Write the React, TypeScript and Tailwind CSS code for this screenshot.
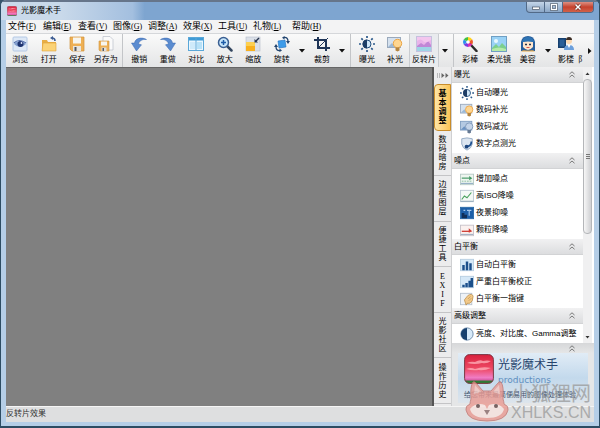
import React, { useState } from 'react';

const FONT = "font-['Liberation_Sans','Noto_Sans_CJK_SC',sans-serif]";

const menus = [
  ['文件', 'F'],
  ['编辑', 'E'],
  ['查看', 'V'],
  ['图像', 'G'],
  ['调整', 'A'],
  ['效果', 'X'],
  ['工具', 'U'],
  ['礼物', 'L'],
  ['帮助', 'H'],
];

const tabs = ['基本调整', '数码暗房', '边框图层', '便捷工具', 'EXIF', '光影社区', '操作历史'];

const groups = [
  {
    title: '曝光',
    items: [
      ['sun', '自动曝光'],
      ['fill', '数码补光'],
      ['reduce', '数码减光'],
      ['spot', '数字点测光'],
    ],
  },
  {
    title: '噪点',
    items: [
      ['noise', '增加噪点'],
      ['iso', '高ISO降噪'],
      ['night', '夜景抑噪'],
      ['grain', '颗粒降噪'],
    ],
  },
  {
    title: '白平衡',
    items: [
      ['bars', '自动白平衡'],
      ['stairs', '严重白平衡校正'],
      ['finger', '白平衡一指键'],
    ],
  },
  {
    title: '高级调整',
    items: [['contrast', '亮度、对比度、Gamma调整']],
  },
];

// all icons are drawn on a 16x16 grid
const icons: Record<string, React.ReactNode> = {
  browse: (
    <>
      <rect x="1" y="1" width="14" height="14" rx="1" fill="#dde8f6" stroke="#b4c8e4" />
      <path d="M2 8q6-6 12 0q-6 6-12 0" fill="#7f9cce" />
      <circle cx="8.5" cy="8" r="3" fill="#1f3470" />
      <circle cx="9.5" cy="7" r="0.9" fill="#dbe6ff" />
      <path d="M2 7q5-5 12 0" fill="none" stroke="#5570ac" strokeWidth="1.2" />
    </>
  ),
  open: (
    <>
      <path d="M1 4h5l1 2h8v9H1z" fill="#e8ae45" />
      <path d="M2 7h13v8H1z" fill="#fbd377" stroke="#dfa23b" strokeWidth="0.6" />
      <path d="M14 5q0-3-3-3" fill="none" stroke="#3b5b92" strokeWidth="1.5" />
      <path d="M9 2l3-2v4z" fill="#3b5b92" />
    </>
  ),
  save: (
    <>
      <path d="M1 1h14v14H3l-2-2z" fill="#eeb055" stroke="#d0943c" strokeWidth="0.7" />
      <rect x="4" y="1.5" width="8" height="6" fill="#f7f5ee" />
      <rect x="4" y="10" width="8" height="5" fill="#e8e6e0" />
      <rect x="5.5" y="11" width="2" height="4" fill="#55585e" />
    </>
  ),
  saveAs: (
    <>
      <path d="M5 0.5h7l3 3V14H5z" fill="#fafafa" stroke="#b9bfc8" strokeWidth="0.7" />
      <path d="M1 5h10v10H2l-1-1z" fill="#eeb055" stroke="#d0943c" strokeWidth="0.6" />
      <rect x="3" y="5.5" width="6" height="4" fill="#f7f5ee" />
      <rect x="3.5" y="11.5" width="5" height="3.5" fill="#dedede" />
      <rect x="4.5" y="12" width="1.5" height="3" fill="#55585e" />
    </>
  ),
  undo: (
    <path d="M0.5 7l3 .1C4 2.500 10 .5 15.500 3.500 11 3 8 5 7.500 8l3 .8L5.500 15z" fill="#5b8cd0" stroke="#3a68b0" strokeWidth="0.5" />
  ),
  redo: (
    <path d="M15.500 7l-3 .1C12 2.500 6 .5 .5 3.500 5 3 8 5 8.500 8l-3 .8L10.500 15z" fill="#5b8cd0" stroke="#3a68b0" strokeWidth="0.5" />
  ),
  compare: (
    <>
      <rect x="0.5" y="1.5" width="15" height="13" fill="#eaf6fe" stroke="#5aa7d8" />
      <rect x="1" y="2" width="14" height="2.5" fill="#3f9bd6" />
      <path d="M8 2v12" stroke="#5aa7d8" />
      <rect x="2" y="6" width="5" height="7" fill="#cfeafa" />
      <rect x="9" y="6" width="5" height="7" fill="#b8e1f7" />
    </>
  ),
  zoomIn: (
    <>
      <path d="M10 10l4.500 4.500" stroke="#33465f" strokeWidth="2.5" strokeLinecap="round" />
      <circle cx="6.5" cy="6.5" r="5" fill="#c7e5fa" stroke="#3a5f92" strokeWidth="1.5" />
      <path d="M6.500 4v5M4 6.500h5" stroke="#1e5ca8" strokeWidth="1.5" />
    </>
  ),
  resize: (
    <>
      <rect x="1" y="1" width="14" height="14" fill="#dbe0e8" stroke="#b5bdca" strokeWidth="0.6" />
      <rect x="1" y="6" width="9" height="9" fill="#f9b01e" />
      <rect x="1" y="6" width="9" height="4" fill="#fdd051" />
      <path d="M14 2l-3 3" stroke="#26334d" strokeWidth="1.5" />
      <path d="M9.500 6.500V3l3.500 3.500z" fill="#26334d" />
    </>
  ),
  rotate: (
    <>
      <path d="M4 5l7-1 1 7-7 1z" fill="#3d9be9" stroke="#1e6fc0" strokeWidth="0.6" />
      <path d="M10 1.500q4-.5 4 4M6 14.500q-4 .5-4-4" fill="none" stroke="#22446f" strokeWidth="1.3" />
      <path d="M12 5h4l-2 3zM0 11h4L2 8zM10.500 0v3.500L8 1.800zM5.500 12.500V16L8 14.500z" fill="#22446f" />
    </>
  ),
  crop: (
    <>
      <path d="M4 1v11h12M0 4h12v11" fill="none" stroke="#1f3558" strokeWidth="2" />
      <path d="M4 12L14 2" stroke="#1f3558" />
    </>
  ),
  sun: (
    <>
      <circle cx="8" cy="8" r="4" fill="#cfe6f8" stroke="#24507f" />
      <path d="M8 3.500a4.500 4.500 0 0 0 0 9z" fill="#1d3d66" />
      <path d="M8 0v2M8 14v2M0 8h2M14 8h2M2.300 2.300l1.500 1.500M12.200 12.200l1.500 1.500M2.300 13.700l1.500-1.500M12.200 3.800l1.500-1.500" stroke="#2c5a8c" strokeWidth="1.7" />
    </>
  ),
  fill: (
    <>
      <rect x="0.5" y="1.5" width="13" height="10" fill="#d5e1ee" stroke="#9aa9bc" />
      <path d="M1 11l4-4 3 4z" fill="#9bb8d6" />
      <circle cx="10.5" cy="7.5" r="4.2" fill="#ffd690" stroke="#eba546" />
      <path d="M8.500 11.500h4v3l-2 1-2-1z" fill="#b5853f" />
    </>
  ),
  reduce: (
    <>
      <rect x="0.5" y="1.5" width="13" height="10" fill="#b4c9e2" stroke="#7f9cc0" />
      <path d="M1 11l4-4 3 4z" fill="#6a91c1" />
      <circle cx="10.5" cy="7.5" r="4.2" fill="#c3d3e8" stroke="#7d96b7" />
      <path d="M8.500 11.500h4v3l-2 1-2-1z" fill="#667a94" />
    </>
  ),
  invert: (
    <>
      <rect x="0.5" y="0.5" width="15" height="15" fill="#e9b4ea" stroke="#c5c0de" />
      <path d="M1 10l4-3 3 2 4-4 3 4v3H1z" fill="#c087d6" />
      <path d="M1 5q4-3 6 0t8-1v-3H1z" fill="#f3c6ee" />
      <rect x="1" y="11" width="14" height="4" fill="#9ed4e6" />
    </>
  ),
  wand: (
    <>
      <path d="M8 8l6.500 7" stroke="#2b2b2b" strokeWidth="2.5" strokeLinecap="round" />
      <path d="M6 6V1a5 5 0 0 1 4.300 2.500z" fill="#ffd21c" />
      <path d="M6 6l4.300-2.500a5 5 0 0 1 0 5z" fill="#ef5b2b" />
      <path d="M6 6l4.300 2.500A5 5 0 0 1 6 11z" fill="#d92cb4" />
      <path d="M6 6v5a5 5 0 0 1-4.300-2.500z" fill="#7a3be0" />
      <path d="M6 6L1.700 8.500a5 5 0 0 1 0-5z" fill="#2c8ff0" />
      <path d="M6 6L1.700 3.500A5 5 0 0 1 6 1z" fill="#42c043" />
      <circle cx="6" cy="6" r="1.8" fill="#fff" />
    </>
  ),
  soft: (
    <>
      <rect x="0.5" y="0.5" width="15" height="15" fill="#9ad2f6" stroke="#6f9fc4" />
      <circle cx="5" cy="5" r="2" fill="#e8f8ff" />
      <path d="M1 12l4-4 3 3 3-4 4 4v4H1z" fill="#7ccf8d" />
      <path d="M1 13q7-3 14 0v2H1z" fill="#b5eba8" />
    </>
  ),
  beauty: (
    <>
      <path d="M1 15V6q1-6 7-6t7 6v9z" fill="#275f9e" />
      <path d="M3 6q5-2 10 0v5q-5 6-10 0z" fill="#ffe5cb" />
      <path d="M2 6q1-5 6-5t6 5q-6-1-12 0" fill="#2f74b4" />
      <path d="M5 8.500h2M9 8.500h2" stroke="#24344d" strokeWidth="1.3" />
      <path d="M6.500 11.500h3" stroke="#d4574e" />
      <path d="M1 15.500q2-2 5-1h4q3-1 5 1z" fill="#e9a947" />
    </>
  ),
  studio: (
    <>
      <rect x="0" y="2" width="8" height="10" fill="#17406e" />
      <rect x="1.5" y="3.5" width="5" height="7" fill="#2a5f98" />
      <circle cx="11" cy="5" r="3" fill="#fbd7b0" />
      <path d="M8 4q0-3 3-3t3 3z" fill="#3b2c24" />
      <path d="M6 14q0-5 5-5t5 5z" fill="#6c9fdb" />
      <path d="M9.500 9l1.500 3 1.500-3z" fill="#fff" />
    </>
  ),
  spot: (
    <>
      <path d="M2 2q6-2 12 0v6q-1 5-6 7-5-2-6-7z" fill="#dbe5f0" stroke="#8ea5c0" />
      <path d="M13 5q0 5-5 6" fill="none" stroke="#1c4f8f" strokeWidth="2" />
      <circle cx="7.5" cy="11" r="2.2" fill="#1d447c" />
    </>
  ),
  noise: (
    <>
      <rect x="0.5" y="2.5" width="15" height="12" fill="#eef6f0" stroke="#b5c8c4" />
      <path d="M2 7h9" stroke="#3f9560" strokeWidth="1.3" />
      <path d="M10.500 4.500L14 7l-3.500 2.500z" fill="#3f9560" />
      <path d="M2 10.500h2M5 10.500h2M8 10.500h2M11 10.500h2" stroke="#86b89a" />
      <path d="M1 13h14" stroke="#7d9cba" />
    </>
  ),
  iso: (
    <>
      <rect x="0.5" y="1.5" width="15" height="13" fill="#f4f9f6" stroke="#b9c6d1" />
      <path d="M2 12l3-4 3 2 5-6" fill="none" stroke="#4ba35f" strokeWidth="1.3" />
      <path d="M1 14h14" stroke="#8aa2b5" />
    </>
  ),
  night: (
    <>
      <rect x="0.5" y="1.5" width="15" height="13" fill="#1d5fa8" stroke="#2a6aa8" />
      <path d="M2 14V8h3v2h3v4z" fill="#0f2e57" />
      <path d="M8 5h5M10.500 5v6M4 5h2" stroke="#a8cbee" strokeWidth="1.3" />
    </>
  ),
  grain: (
    <>
      <rect x="0.5" y="2.5" width="15" height="12" fill="#fbf1ef" stroke="#c5c0c8" />
      <path d="M2 9.500h9" stroke="#cf3d34" strokeWidth="1.5" />
      <path d="M10 6l4 3.500-4 1.500z" fill="#cf3d34" />
      <path d="M1 13h14" stroke="#8a9fb8" />
    </>
  ),
  bars: (
    <>
      <rect x="0.5" y="1.5" width="15" height="13" fill="#d5e8f7" stroke="#b5cde0" />
      <path d="M4 14V8M8 14V4M12 14V6" stroke="#1b4f8b" strokeWidth="2.8" />
    </>
  ),
  stairs: (
    <>
      <rect x="0.5" y="1.5" width="15" height="13" fill="#d5e8f7" stroke="#b5cde0" />
      <path d="M4 14v-3M7.500 14V9M11 14V6.500M13.500 14V3.500" stroke="#1b4f8b" strokeWidth="2.8" />
    </>
  ),
  finger: (
    <>
      <rect x="0.5" y="1.5" width="13" height="13" fill="#eef2f7" stroke="#b6c1ce" />
      <path d="M5 9l4-5q5-3 6 1l-1 5q-2 4-6 3l-1 2z" fill="#f2c98a" stroke="#b98a43" strokeWidth="0.8" />
      <path d="M9 8l3-3M10 10l3-3" stroke="#b98a43" strokeWidth="0.7" />
    </>
  ),
  contrast: (
    <>
      <circle cx="8" cy="8" r="7" fill="#d6e9f8" stroke="#6685a5" />
      <path d="M8 1a7 7 0 0 0 0 14z" fill="#17406e" />
    </>
  ),
};

function Icon({ name, className }: { name: string; className: string }) {
  return (
    <svg viewBox="0 0 16 16" className={`shrink-0 ${className}`} aria-hidden="true">
      {icons[name]}
    </svg>
  );
}

function Logo({ className }: { className: string }) {
  return (
    <svg viewBox="0 0 30 30" className={`shrink-0 ${className}`} aria-hidden="true">
      <defs>
        <linearGradient id="sky" x1="0" y1="0" x2="0" y2="1">
          <stop offset="0" stopColor="#d8203c" />
          <stop offset="0.5" stopColor="#ee4a66" />
          <stop offset="0.8" stopColor="#f07cc4" />
          <stop offset="0.88" stopColor="#d85aa4" />
          <stop offset="0.92" stopColor="#2f7a35" />
        </linearGradient>
      </defs>
      <rect x="0.6" y="0.6" width="28.8" height="28.8" rx="5" fill="url(#sky)" stroke="#7b3743" strokeWidth="1" />
      <path d="M3 9q4-2 8-1 5-3 8-1 4-1 8 0-4 3-9 2-7 2-15 0M2 15q5-2 9 0 8-3 16-1-7 3-12 2-7 1-13-1" fill="#ffb3bc" opacity="0.75" />
    </svg>
  );
}

function Tool({ icon, label, active }: { icon: string; label: string; active?: boolean }) {
  return (
    <button
      type="button"
      className={`flex min-w-0 flex-1 flex-col items-center gap-px pt-0.5 ${active ? 'border-x border-[#c9ccd0] bg-[#e9ebee]' : ''}`}
    >
      <Icon name={icon} className="size-4" />
      <span className="text-[8px] leading-[14px] whitespace-nowrap">{label}</span>
    </button>
  );
}

function DropArrow({ label }: { label: string }) {
  return (
    <button type="button" aria-label={label} className="flex w-3 shrink-0 items-center justify-center">
      <svg viewBox="0 0 6 4" className="h-1 w-1.5"><path d="M0 0h6L3 3.500z" fill="#111" /></svg>
    </button>
  );
}

function Separator() {
  return <div className="mx-0.5 w-px shrink-0 bg-[#c3c5c8]" />;
}

function Chevrons() {
  return (
    <svg viewBox="0 0 6 7" className="h-[7px] w-1.5" aria-hidden="true">
      <path d="M0.500 3L3 .8 5.500 3M.5 6.200L3 4l2.500 2.200" fill="none" stroke="#6c6c6c" strokeWidth="0.9" />
    </svg>
  );
}

function TitleBar() {
  return (
    <header className="flex h-5 shrink-0 items-start border-t-2 border-[#66758a] bg-linear-to-r from-[#c9d9ea] from-10% via-[#a3bfdf] via-22% to-[#7ea5d0] to-24%">
      <div className="flex h-[17px] flex-1 items-center gap-1 pl-1.5">
        <Logo className="size-2.5" />
        <h1 className="text-[8px] leading-[12px]">光影魔术手</h1>
      </div>
      <div className="mr-[5px] flex h-[11px] overflow-hidden rounded-b border border-t-0 border-[#526a88] bg-linear-to-b from-[#c4d5e8] to-[#8aa6c6]">
        <button type="button" aria-label="最小化" className="flex w-[18px] items-center justify-center border-r border-[#526a88]">
          <svg viewBox="0 0 8 6" className="h-1.5 w-2"><rect x="0.5" y="3" width="7" height="2.5" fill="#fff" stroke="#4a5666" strokeWidth="0.7" /></svg>
        </button>
        <button type="button" aria-label="最大化" className="flex w-[18px] items-center justify-center border-r border-[#526a88]">
          <svg viewBox="0 0 8 8" className="size-2"><rect x="1.5" y="1.5" width="5" height="5" fill="none" stroke="#4a5666" strokeWidth="2.5" /><rect x="1.5" y="1.5" width="5" height="5" fill="none" stroke="#fff" strokeWidth="1.3" /></svg>
        </button>
        <button type="button" aria-label="关闭" className="flex w-[30px] items-center justify-center bg-linear-to-b from-[#dc8f82] via-[#c5412d] to-[#d0614a]">
          <svg viewBox="0 0 8 8" className="size-2"><path d="M1.500 1.500l5 5M6.500 1.500l-5 5" stroke="#5c2019" strokeWidth="2.6" /><path d="M1.500 1.500l5 5M6.500 1.500l-5 5" stroke="#fff" strokeWidth="1.5" /></svg>
        </button>
      </div>
    </header>
  );
}

function MenuBar() {
  return (
    <nav className="flex h-3.5 shrink-0 items-end border-b border-[#d5d7da] bg-[#f3f3f4] pl-0.5">
      {menus.map(([name, key]) => (
        <button key={key} type="button" className={`text-left text-[9px] leading-[12px] whitespace-nowrap ${key === 'L' ? 'w-[39px]' : 'w-[35px]'}`}>
          {name}
          <span className="font-['Liberation_Serif',serif] text-[8px]">
            (<u>{key}</u>)
          </span>
        </button>
      ))}
    </nav>
  );
}

function Toolbar() {
  return (
    <div className="flex h-[33px] shrink-0 overflow-hidden bg-linear-to-b from-[#fafafa] to-[#e4e5e6]">
      <div className="flex w-[114px] shrink-0">
        <Tool icon="browse" label="浏览" />
        <Tool icon="open" label="打开" />
        <Tool icon="save" label="保存" />
        <Tool icon="saveAs" label="另存为" />
      </div>
      <Separator />
      <div className="flex w-[171px] shrink-0">
        <Tool icon="undo" label="撤销" />
        <Tool icon="redo" label="重做" />
        <Tool icon="compare" label="对比" />
        <Tool icon="zoomIn" label="放大" />
        <Tool icon="resize" label="缩放" />
        <Tool icon="rotate" label="旋转" />
      </div>
      <DropArrow label="旋转选项" />
      <div className="flex w-7 shrink-0">
        <Tool icon="crop" label="裁剪" />
      </div>
      <DropArrow label="裁剪选项" />
      <Separator />
      <div className="flex w-[86px] shrink-0">
        <Tool icon="sun" label="曝光" />
        <Tool icon="fill" label="补光" />
        <Tool icon="invert" label="反转片" active />
      </div>
      <DropArrow label="反转片选项" />
      <Separator />
      <div className="flex w-[86px] shrink-0">
        <Tool icon="wand" label="彩棒" />
        <Tool icon="soft" label="柔光镜" />
        <Tool icon="beauty" label="美容" />
      </div>
      <DropArrow label="美容选项" />
      <div className="flex w-6 shrink-0">
        <Tool icon="studio" label="影楼" />
      </div>
      <button type="button" className="flex min-w-0 flex-1 items-end pb-px text-[8px] leading-[12px]">
        阝
      </button>
      <button type="button" aria-label="更多" className="flex w-1.5 shrink-0 items-center">
        <svg viewBox="0 0 4 6" className="h-1.5 w-1"><path d="M0 0v6l3.500-3z" fill="#111" /></svg>
      </button>
    </div>
  );
}

function TabStrip({ current, onSelect }: { current: string; onSelect: (t: string) => void }) {
  return (
    <div role="tablist" className="flex w-[19px] shrink-0 flex-col border-l-2 border-[#555] bg-[#ececed] pb-0.5">
      <button type="button" aria-label="收起面板" className="flex h-[17px] shrink-0 items-center justify-center">
        <svg viewBox="0 0 12 5" className="h-[5px] w-3"><path d="M0.500 0v5M2.500 0v5" stroke="#aaa" strokeWidth="0.8" /><path d="M4.500 0v5L7.500 2.500zM8.500 0v5l3-2.500z" fill="#666" /></svg>
      </button>
      {tabs.map((tab) => (
        <button
          key={tab}
          type="button"
          role="tab"
          aria-selected={tab === current}
          onClick={() => onSelect(tab)}
          className={`flex flex-1 flex-col items-center justify-center text-[8px] leading-[9px] ${
            tab === current
              ? 'rounded-l border border-[#c98d2b] bg-linear-to-r from-[#ffe6a6] to-[#fbc555] font-bold'
              : 'border-b border-[#c4c4c6]'
          } ${tab === 'EXIF' ? "font-['Liberation_Serif',serif]" : ''}`}
        >
          {tab.split('').map((ch, i) => (
            <span key={i}>{ch}</span>
          ))}
        </button>
      ))}
    </div>
  );
}

function Panel() {
  return (
    <div className="flex min-h-0 flex-1">
      <div className="min-w-0 flex-1 overflow-hidden bg-white">
        {groups.map((group) => (
          <section key={group.title}>
            <h2>
              <button type="button" className="flex h-4 w-full items-center justify-between border-b border-[#d2d3d5] bg-linear-to-b from-[#f1f1f2] to-[#dcdddf] pr-2 pl-0.5 text-[8px] leading-[12px]">
                {group.title}
                <Chevrons />
              </button>
            </h2>
            <ul className="py-px">
              {group.items.map(([icon, label]) => (
                <li key={label}>
                  <button type="button" className="flex h-[17px] items-center gap-0.5 pl-2 text-[8px] leading-[12px] whitespace-nowrap">
                    <Icon name={icon} className="size-3.5" />
                    {label}
                  </button>
                </li>
              ))}
            </ul>
          </section>
        ))}
      </div>
      <div className="flex w-[11px] shrink-0 flex-col items-center border-r-2 border-white bg-[#f0f0f1]">
        <svg viewBox="0 0 9 12" className="h-3 w-[9px]"><path d="M2.500 8h4l-2-2.500z" fill="#333" /></svg>
        <div className="flex h-[155px] w-full items-center justify-center rounded-sm border border-[#b4b6b9] bg-linear-to-r from-[#f7f7f7] to-[#cfd0d3]">
          <svg viewBox="0 0 4 6" className="h-1.5 w-1"><path d="M0 .5h4M0 2.500h4M0 4.500h4" stroke="#777" /></svg>
        </div>
        <div className="flex-1" />
        <svg viewBox="0 0 9 12" className="h-3 w-[9px]"><path d="M2.500 5h4l-2 2.500z" fill="#333" /></svg>
      </div>
    </div>
  );
}

function Banner() {
  return (
    <div className="h-[63px] shrink-0 bg-[#e5e6e7]">
      <div className="flex h-2.5 items-center justify-end bg-linear-to-b from-[#d6d7d9] to-[#e5e6e7] pr-[19px]">
        <Chevrons />
      </div>
      <div className="mr-1.5 ml-1.5 h-[50px] bg-linear-to-b from-[#e1ecf6] via-[#c3d9ec] to-[#dde5ec] px-1.5 pt-px">
        <div className="flex gap-1">
          <Logo className="size-[30px]" />
          <div>
            <p className="text-[12px] leading-[22px] text-[#27446d]">光影魔术手</p>
            <p className="font-['DejaVu_Sans',sans-serif] text-[9px] leading-[8px] text-[#5f8fc0]">productions</p>
          </div>
        </div>
        <p className="pt-1.5 text-[7px] leading-[10px] whitespace-nowrap text-[#45566e]">给您带来最简便易用的图像处理体验</p>
      </div>
    </div>
  );
}

// fox and site name laid over the lower right corner
function Watermark() {
  return (
    <div className="pointer-events-none absolute right-2 bottom-1 flex items-end gap-0.5">
      <svg viewBox="0 0 44 42" className="h-[42px] w-11 opacity-80" aria-hidden="true">
        <path d="M6 19Q5 6 8 2q1-1 3 1l7 8h8l7-8q2-2 3-1 3 4 2 17 1 3 1 5 5 2 4 6-2 11-21 11T1 30q-1-4 4-6 0-2 1-5z" fill="#ea9a92" stroke="#c27570" />
        <path d="M9 14l1-9 6 7zM35 14l-1-9-6 7z" fill="#f5c5be" />
        <path d="M5 29q6-7 15-4l2 4 2-4q9-3 15 4-2 9-17 9T5 29z" fill="#f8e3df" />
        <circle cx="13" cy="26" r="2" fill="#5b4040" />
        <circle cx="31" cy="26" r="2" fill="#5b4040" />
        <path d="M19 30h6l-3 5z" fill="#8b6b6b" />
      </svg>
      <div className="text-[#999] opacity-75">
        <p className="text-[20px] leading-[20px]">小狐狸网</p>
        <p className="text-[16px] leading-[18px]">XHLKS.CN</p>
      </div>
    </div>
  );
}

export default function App() {
  const [tab, setTab] = useState('基本调整');

  return (
    <div className="bg-[#38556c]">
      <div className={`relative flex h-screen flex-col overflow-hidden rounded-t-md border-x border-b-2 border-[#2d4c63] bg-[#b5cee7] text-black ${FONT}`}>
        <TitleBar />
        <div className="mx-[5px] mb-1 flex min-h-0 flex-1 flex-col bg-[#e5e6e7]">
          <MenuBar />
          <Toolbar />
          <div className="flex min-h-0 flex-1">
            <main className="flex-1 border-t border-[#666] bg-[#808080]" />
            <TabStrip current={tab} onSelect={setTab} />
            <aside className="flex w-[143px] shrink-0 flex-col border-l border-[#cfd0d2]">
              <Panel />
              <Banner />
            </aside>
          </div>
          <footer className="h-4 shrink-0 border-t border-[#f5f5f5] bg-[#dedfe0] text-[8px] leading-[14px] text-[#333]">
            反转片效果
          </footer>
        </div>
        <Watermark />
      </div>
    </div>
  );
}
